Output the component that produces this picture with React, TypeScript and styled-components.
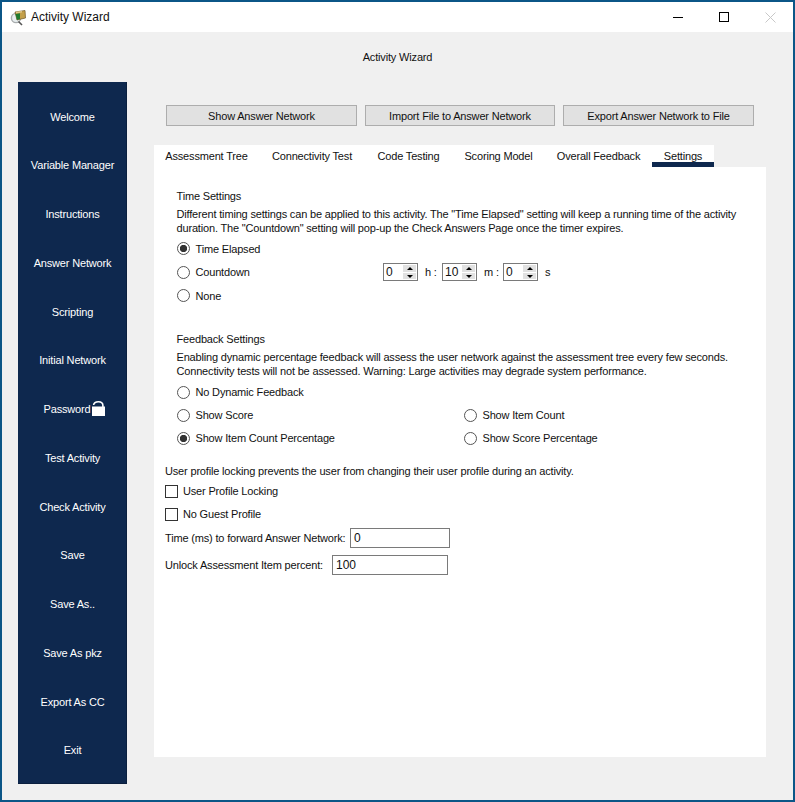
import React from "react";
import styled, { createGlobalStyle } from "styled-components";

const GlobalStyle = createGlobalStyle`
  html, body {
    margin: 0;
    padding: 0;
    background: #f0f0f0;
  }
  * {
    box-sizing: border-box;
  }
`;

const navItems = [
  "Welcome",
  "Variable Manager",
  "Instructions",
  "Answer Network",
  "Scripting",
  "Initial Network",
  "Password",
  "Test Activity",
  "Check Activity",
  "Save",
  "Save As..",
  "Save As pkz",
  "Export As CC",
  "Exit",
];

const tabs = [
  { label: "Assessment Tree", width: 105 },
  { label: "Connectivity Test", width: 106 },
  { label: "Code Testing", width: 87 },
  { label: "Scoring Model", width: 93 },
  { label: "Overall Feedback", width: 107 },
  { label: "Settings", width: 62 },
];

function AppIcon() {
  return (
    <svg width="17" height="17" viewBox="0 0 17 17">
      <circle cx="6" cy="9" r="4.6" fill="#e8eef0" stroke="#a8acae" strokeWidth="1.4" />
      <path d="M8.5 12.5 L12 16" stroke="#555" strokeWidth="1.6" />
      <path d="M5 3 L15 1.5 L15.5 9 L7 11 Z" fill="#c4a04a" stroke="#6b5424" strokeWidth="0.7" />
      <path d="M5.5 5 L10 4.2 L10 10 L7 11 Z" fill="#1f7a2e" />
      <path d="M6 2.8 L12 2 L12 3.4 L6 4.2 Z" fill="#e2c98a" />
    </svg>
  );
}

function LockIcon() {
  return (
    <LockGlyph width="15" height="17" viewBox="0 0 15 17">
      {/* open shackle: the left leg stops short of the body */}
      <path d="M2.6 4 C2.9 1.9 4.8 0.8 7.4 0.8 C10.2 0.8 11.9 2.2 11.9 4.6 V6" fill="none" stroke="#fff" strokeWidth="1.6" />
      <rect x="1" y="5.5" width="13" height="9.5" fill="#fff" />
    </LockGlyph>
  );
}

function Spinner({ value }: { value: string }) {
  return (
    <SpinBox>
      <SpinValue>{value}</SpinValue>
      <SpinButtons>
        <SpinArrow $up />
        <SpinArrow />
      </SpinButtons>
    </SpinBox>
  );
}

function Radio({ label, checked }: { label: string; checked?: boolean }) {
  return (
    <RadioLabel>
      <RadioCircle $checked={checked} />
      {label}
    </RadioLabel>
  );
}

export default function App() {
  return (
    <Window>
      <GlobalStyle />
      <TitleBar>
        <TitleIcon>
          <AppIcon />
        </TitleIcon>
        <TitleText>Activity Wizard</TitleText>
        <WindowButtons>
          <WindowButton>
            <svg width="11" height="11" viewBox="0 0 11 11">
              <path d="M0 5.5 H10" stroke="#000" strokeWidth="1" />
            </svg>
          </WindowButton>
          <WindowButton>
            <svg width="11" height="11" viewBox="0 0 11 11">
              <rect x="0.5" y="0.5" width="9" height="9" fill="none" stroke="#000" strokeWidth="1" />
            </svg>
          </WindowButton>
          <WindowButton>
            <svg width="11" height="11" viewBox="0 0 11 11">
              <path d="M0.5 0.5 L10.5 10.5 M10.5 0.5 L0.5 10.5" stroke="#c8c8c8" strokeWidth="1" />
            </svg>
          </WindowButton>
        </WindowButtons>
      </TitleBar>

      <Heading>Activity Wizard</Heading>

      <Columns>
        <Sidebar>
          {navItems.map((item) => (
            <NavItem key={item}>
              {item}
              {item === "Password" && <LockIcon />}
            </NavItem>
          ))}
        </Sidebar>

        <Main>
          <ActionBar>
            <ActionButton>Show Answer Network</ActionButton>
            <ActionButton>Import File to Answer Network</ActionButton>
            <ActionButton>Export Answer Network to File</ActionButton>
          </ActionBar>

          <TabBar>
            {tabs.map((tab) => (
              <Tab key={tab.label} $width={tab.width} $active={tab.label === "Settings"}>
                {tab.label}
              </Tab>
            ))}
          </TabBar>

          <Panel>
            <Section>
              <SectionTitle>Time Settings</SectionTitle>
              <Description $after={2}>
                Different timing settings can be applied to this activity. The "Time Elapsed" setting will keep a running time of the activity
                <br />
                duration. The "Countdown" setting will pop-up the Check Answers Page once the timer expires.
              </Description>
              <OptionRow>
                <Radio label="Time Elapsed" checked />
              </OptionRow>
              <TimerRow>
                <Radio label="Countdown" />
                <TimerGroup>
                  <Spinner value="0" />
                  <TimerUnit $width={24}>h :</TimerUnit>
                  <Spinner value="10" />
                  <TimerUnit $width={26}>m :</TimerUnit>
                  <Spinner value="0" />
                  <TimerUnit $width={14}>s</TimerUnit>
                </TimerGroup>
              </TimerRow>
              <OptionRow>
                <Radio label="None" />
              </OptionRow>
            </Section>

            <FeedbackSection>
              <SectionTitle>Feedback Settings</SectionTitle>
              <Description $after={3}>
                Enabling dynamic percentage feedback will assess the user network against the assessment tree every few seconds.
                <br />
                Connectivity tests will not be assessed. Warning: Large activities may degrade system performance.
              </Description>
              <FeedbackGrid>
                <FullRow>
                  <Radio label="No Dynamic Feedback" />
                </FullRow>
                <Radio label="Show Score" />
                <Radio label="Show Item Count" />
                <Radio label="Show Item Count Percentage" checked />
                <Radio label="Show Score Percentage" />
              </FeedbackGrid>
            </FeedbackSection>

            <ProfileSection>
              <ProfileNote>User profile locking prevents the user from changing their user profile during an activity.</ProfileNote>
              <CheckRow>
                <CheckBox />
                User Profile Locking
              </CheckRow>
              <CheckRow>
                <CheckBox />
                No Guest Profile
              </CheckRow>
              <FieldRow>
                <FieldLabel $width={185}>Time (ms) to forward Answer Network:</FieldLabel>
                <FieldBox $width={100}>0</FieldBox>
              </FieldRow>
              <FieldRow>
                <FieldLabel $width={167}>Unlock Assessment Item percent:</FieldLabel>
                <FieldBox $width={116}>100</FieldBox>
              </FieldRow>
            </ProfileSection>
          </Panel>
        </Main>
      </Columns>
    </Window>
  );
}

const Window = styled.div`
  width: 795px;
  height: 802px;
  border: 2px solid #0b5687;
  background: #f0f0f0;
  font-family: "Liberation Sans", Arial, sans-serif;
  font-size: 11px;
  letter-spacing: -0.17px;
  color: #111;
  overflow: hidden;
`;

const TitleBar = styled.div`
  display: flex;
  align-items: center;
  height: 30px;
  background: #fff;
  padding-left: 8px;
`;

const TitleIcon = styled.div`
  display: flex;
  width: 17px;
  height: 17px;
`;

const TitleText = styled.span`
  margin-left: 4px;
  font-size: 12px;
  letter-spacing: 0;
`;

const WindowButtons = styled.div`
  display: flex;
  margin-left: auto;
`;

const WindowButton = styled.div`
  display: flex;
  align-items: center;
  justify-content: center;
  width: 46px;
  height: 30px;
`;

const Heading = styled.div`
  height: 50px;
  display: flex;
  align-items: center;
  justify-content: center;
`;

const Columns = styled.div`
  display: flex;
  padding-left: 16px;
`;

const Sidebar = styled.nav`
  display: flex;
  flex-direction: column;
  width: 109px;
  height: 702px;
  padding-top: 10.3px;
  background: #0e284e;
  border-right: 1px solid #0a1f3e;
  border-bottom: 1px solid #0a1f3e;
`;

const NavItem = styled.div`
  display: flex;
  align-items: center;
  justify-content: center;
  flex: 0 0 48.75px;
  padding-left: 1px;
  color: #fff;
`;

const LockGlyph = styled.svg`
  margin-right: -5px;
  margin-left: 1px;
`;

const Main = styled.div`
  display: flex;
  flex-direction: column;
  width: 612px;
  margin-left: 27px;
`;

const ActionBar = styled.div`
  display: flex;
  gap: 8px;
  margin-top: 23px;
  padding-left: 12px;
`;

const ActionButton = styled.button`
  width: 191px;
  height: 21px;
  padding: 0;
  background: #e1e1e1;
  border: 1px solid #adadad;
  font: inherit;
  letter-spacing: inherit;
  color: inherit;
  &:nth-child(2) {
    width: 190px;
  }
`;

const TabBar = styled.div`
  display: flex;
  width: 560px;
  height: 22px;
  margin-top: 19px;
  background: #fff;
`;

const Tab = styled.div<{ $active?: boolean; $width: number }>`
  width: ${(p) => p.$width}px;
  padding-top: 5px;
  height: 22px;
  text-align: center;
  white-space: nowrap;
  border-bottom: 5px solid ${(p) => (p.$active ? "#0e284e" : "transparent")};
`;

const Panel = styled.div`
  height: 590px;
  background: #fff;
  padding: 22px 11px 0;
`;

const Section = styled.div`
  padding-left: 11.5px;
`;

const SectionTitle = styled.div`
  height: 14px;
  line-height: 14px;
`;

const Description = styled.div<{ $after: number }>`
  margin-top: 4px;
  margin-bottom: ${(p) => p.$after}px;
  line-height: 14px;
  white-space: nowrap;
`;

const OptionRow = styled.div`
  display: flex;
  align-items: center;
  height: 23.5px;
`;

const TimerRow = styled(OptionRow)`
  display: grid;
  grid-template-columns: 206.5px auto;
`;

const RadioLabel = styled.label`
  display: flex;
  align-items: center;
  gap: 6px;
  white-space: nowrap;
`;

const RadioCircle = styled.span<{ $checked?: boolean }>`
  flex: none;
  width: 13px;
  height: 13px;
  border: 1px solid #555;
  border-radius: 50%;
  background: ${(p) => (p.$checked ? "radial-gradient(circle, #333 0 3.4px, #fff 3.9px)" : "#fff")};
`;

const TimerGroup = styled.div`
  display: flex;
  align-items: center;
`;

const SpinBox = styled.div`
  display: flex;
  align-items: center;
  justify-content: space-between;
  width: 35px;
  height: 18px;
  border: 1px solid #7a7a7a;
  padding: 0 1px 0 2px;
`;

const SpinValue = styled.span`
  font-size: 12px;
  letter-spacing: 0;
  line-height: 14px;
`;

const SpinButtons = styled.div`
  display: flex;
  flex-direction: column;
  gap: 1px;
  width: 13px;
  height: 14px;
`;

const SpinArrow = styled.div<{ $up?: boolean }>`
  position: relative;
  flex: 1;
  background: #e1e1e1;
  &::after {
    content: "";
    position: absolute;
    left: 3.5px;
    top: ${(p) => (p.$up ? "1.5px" : "2px")};
    border-left: 3px solid transparent;
    border-right: 3px solid transparent;
    ${(p) => (p.$up ? "border-bottom: 3px solid #000;" : "border-top: 3px solid #000;")}
  }
`;

const TimerUnit = styled.span<{ $width: number }>`
  width: ${(p) => p.$width}px;
  padding-left: 7px;
  white-space: nowrap;
`;

const FeedbackSection = styled(Section)`
  margin-top: 24px;
`;

const FeedbackGrid = styled.div`
  display: grid;
  grid-template-columns: 287px auto;
  grid-auto-rows: 23px;
  align-items: center;
`;

const FullRow = styled.div`
  grid-column: 1 / -1;
`;

const ProfileSection = styled.div`
  margin-top: 14px;
`;

const ProfileNote = styled.div`
  line-height: 14px;
`;

const CheckRow = styled.label`
  display: flex;
  align-items: center;
  gap: 5px;
  height: 23px;
  &:first-of-type {
    margin-top: 2px;
  }
`;

const CheckBox = styled.span`
  flex: none;
  width: 13px;
  height: 13px;
  border: 1px solid #333;
  background: #fff;
`;

const FieldRow = styled.div`
  display: flex;
  align-items: center;
  margin-top: 2px;
  & + & {
    margin-top: 7px;
  }
`;

const FieldLabel = styled.span<{ $width: number }>`
  width: ${(p) => p.$width}px;
  white-space: nowrap;
`;

const FieldBox = styled.div<{ $width: number }>`
  width: ${(p) => p.$width}px;
  height: 20px;
  border: 1px solid #7a7a7a;
  background: #fff;
  padding-left: 3px;
  font-size: 12px;
  letter-spacing: 0;
  line-height: 18px;
`;
